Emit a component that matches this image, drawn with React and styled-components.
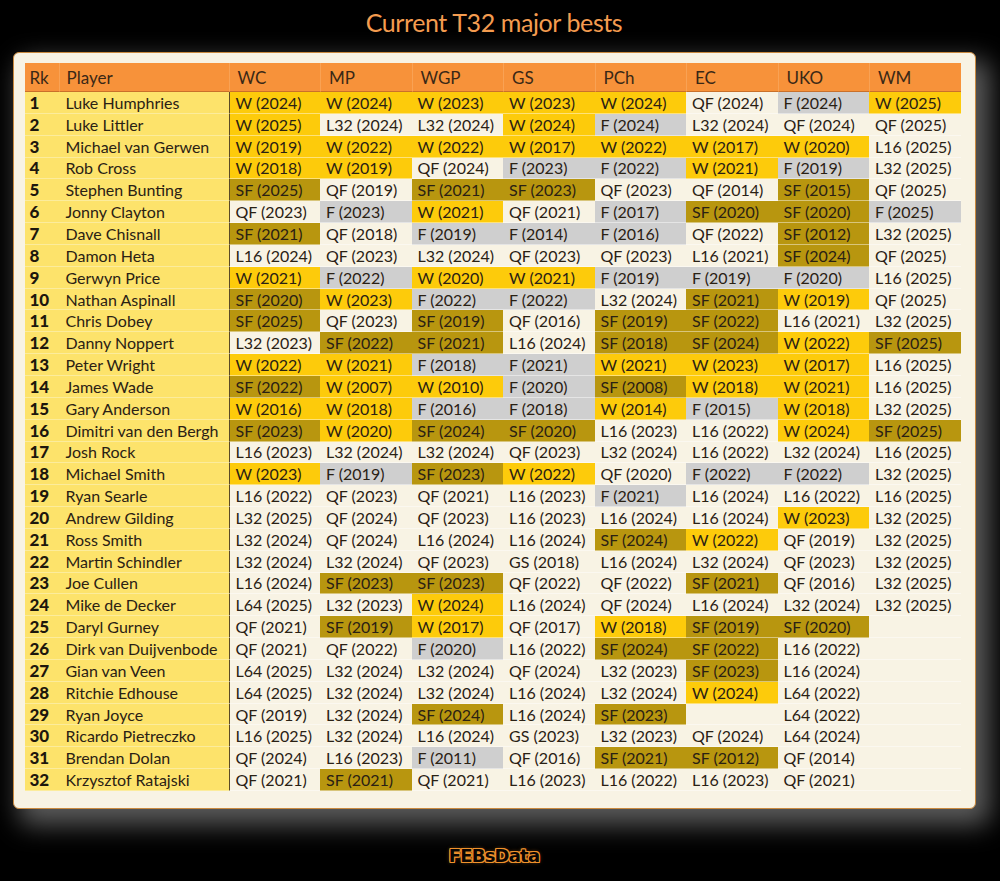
import React from 'react';
import styled, { createGlobalStyle } from 'styled-components';

const GlobalStyle = createGlobalStyle`
  html, body {
    margin: 0;
    padding: 0;
    background: #000;
  }
  body {
    font-family: Lato, "Open Sans", sans-serif;
  }
`;

const Page = styled.div`
  width: 988px;
  min-height: 881px;
  display: flex;
  flex-direction: column;
  align-items: center;
  background: #000;
`;

const Title = styled.h1`
  margin: 7px 0 15px;
  font-size: 25px;
  line-height: 30px;
  font-weight: 400;
  color: #f49c50;
  letter-spacing: -0.4px;
`;

const Card = styled.div`
  background: #f8f3e4;
  border: 1px solid #c9893e;
  border-radius: 6px;
  padding: 10px 14px 17px 11px;
  box-shadow: 10px 12px 26px 4px rgba(130, 130, 130, 0.7);
`;

const Grid = styled.div`
  display: grid;
  grid-template-columns: 34px 170px repeat(8, 91.5px);
  grid-template-rows: 29px;
  grid-auto-rows: 21.85px;
  font-size: 16px;
  color: #2a2114;
`;

const HeadCell = styled.div`
  display: flex;
  align-items: center;
  padding-left: ${p => (p.$pad ? p.$pad : 7)}px;
  background: #f7923a;
  border-left: ${p => (p.$edge ? 'none' : '1px solid #f9a254')};
  border-bottom: 1px solid #c9702a;
  color: #3a2816;
  font-size: 17px;
  white-space: nowrap;
`;

const RankCell = styled.div`
  display: flex;
  align-items: center;
  padding-left: 5px;
  background: #fde36b;
  border-bottom: 1px solid #fcec9c;
  font-weight: 900;
  font-size: 17px;
  color: #1d170d;
`;

const PlayerCell = styled.div`
  display: flex;
  align-items: center;
  padding-left: 7px;
  background: #fde36b;
  border-bottom: 1px solid #fcec9c;
  white-space: nowrap;
`;

const fills = {
  W: '#fdcb0b',
  F: '#cfcfcf',
  SF: '#b8960f',
};

const ResultCell = styled.div`
  display: flex;
  align-items: center;
  padding-left: 6px;
  background: ${p => fills[p.$kind] || 'transparent'};
  border-bottom: 1px solid rgba(255, 255, 255, 0.45);
  border-left: ${p => (p.$first ? '1px solid #5b4a26' : 'none')};
  white-space: nowrap;
`;

const Logo = styled.div`
  margin-top: 36px;
  font-family: "DejaVu Sans", Lato, sans-serif;
  font-weight: 700;
  font-size: 18px;
  letter-spacing: -0.8px;
  color: #0b0603;
  text-shadow:
    1px 0 0 #f0922c, -1px 0 0 #f0922c, 0 1px 0 #f0922c, 0 -1px 0 #f0922c,
    1px 1px 0 #f0922c, -1px -1px 0 #f0922c, 1px -1px 0 #f0922c, -1px 1px 0 #f0922c,
    0 0 4px rgba(240, 146, 44, 0.6);
`;

const events = ['WC', 'MP', 'WGP', 'GS', 'PCh', 'EC', 'UKO', 'WM'];

const players = [
  ['Luke Humphries', 'W (2024)', 'W (2024)', 'W (2023)', 'W (2023)', 'W (2024)', 'QF (2024)', 'F (2024)', 'W (2025)'],
  ['Luke Littler', 'W (2025)', 'L32 (2024)', 'L32 (2024)', 'W (2024)', 'F (2024)', 'L32 (2024)', 'QF (2024)', 'QF (2025)'],
  ['Michael van Gerwen', 'W (2019)', 'W (2022)', 'W (2022)', 'W (2017)', 'W (2022)', 'W (2017)', 'W (2020)', 'L16 (2025)'],
  ['Rob Cross', 'W (2018)', 'W (2019)', 'QF (2024)', 'F (2023)', 'F (2022)', 'W (2021)', 'F (2019)', 'L32 (2025)'],
  ['Stephen Bunting', 'SF (2025)', 'QF (2019)', 'SF (2021)', 'SF (2023)', 'QF (2023)', 'QF (2014)', 'SF (2015)', 'QF (2025)'],
  ['Jonny Clayton', 'QF (2023)', 'F (2023)', 'W (2021)', 'QF (2021)', 'F (2017)', 'SF (2020)', 'SF (2020)', 'F (2025)'],
  ['Dave Chisnall', 'SF (2021)', 'QF (2018)', 'F (2019)', 'F (2014)', 'F (2016)', 'QF (2022)', 'SF (2012)', 'L32 (2025)'],
  ['Damon Heta', 'L16 (2024)', 'QF (2023)', 'L32 (2024)', 'QF (2023)', 'QF (2023)', 'L16 (2021)', 'SF (2024)', 'QF (2025)'],
  ['Gerwyn Price', 'W (2021)', 'F (2022)', 'W (2020)', 'W (2021)', 'F (2019)', 'F (2019)', 'F (2020)', 'L16 (2025)'],
  ['Nathan Aspinall', 'SF (2020)', 'W (2023)', 'F (2022)', 'F (2022)', 'L32 (2024)', 'SF (2021)', 'W (2019)', 'QF (2025)'],
  ['Chris Dobey', 'SF (2025)', 'QF (2023)', 'SF (2019)', 'QF (2016)', 'SF (2019)', 'SF (2022)', 'L16 (2021)', 'L32 (2025)'],
  ['Danny Noppert', 'L32 (2023)', 'SF (2022)', 'SF (2021)', 'L16 (2024)', 'SF (2018)', 'SF (2024)', 'W (2022)', 'SF (2025)'],
  ['Peter Wright', 'W (2022)', 'W (2021)', 'F (2018)', 'F (2021)', 'W (2021)', 'W (2023)', 'W (2017)', 'L16 (2025)'],
  ['James Wade', 'SF (2022)', 'W (2007)', 'W (2010)', 'F (2020)', 'SF (2008)', 'W (2018)', 'W (2021)', 'L16 (2025)'],
  ['Gary Anderson', 'W (2016)', 'W (2018)', 'F (2016)', 'F (2018)', 'W (2014)', 'F (2015)', 'W (2018)', 'L32 (2025)'],
  ['Dimitri van den Bergh', 'SF (2023)', 'W (2020)', 'SF (2024)', 'SF (2020)', 'L16 (2023)', 'L16 (2022)', 'W (2024)', 'SF (2025)'],
  ['Josh Rock', 'L16 (2023)', 'L32 (2024)', 'L32 (2024)', 'QF (2023)', 'L32 (2024)', 'L16 (2022)', 'L32 (2024)', 'L16 (2025)'],
  ['Michael Smith', 'W (2023)', 'F (2019)', 'SF (2023)', 'W (2022)', 'QF (2020)', 'F (2022)', 'F (2022)', 'L32 (2025)'],
  ['Ryan Searle', 'L16 (2022)', 'QF (2023)', 'QF (2021)', 'L16 (2023)', 'F (2021)', 'L16 (2024)', 'L16 (2022)', 'L16 (2025)'],
  ['Andrew Gilding', 'L32 (2025)', 'QF (2024)', 'QF (2023)', 'L16 (2023)', 'L16 (2024)', 'L16 (2024)', 'W (2023)', 'L32 (2025)'],
  ['Ross Smith', 'L32 (2024)', 'QF (2024)', 'L16 (2024)', 'L16 (2024)', 'SF (2024)', 'W (2022)', 'QF (2019)', 'L32 (2025)'],
  ['Martin Schindler', 'L32 (2024)', 'L32 (2024)', 'QF (2023)', 'GS (2018)', 'L16 (2024)', 'L32 (2024)', 'QF (2023)', 'L32 (2025)'],
  ['Joe Cullen', 'L16 (2024)', 'SF (2023)', 'SF (2023)', 'QF (2022)', 'QF (2022)', 'SF (2021)', 'QF (2016)', 'L32 (2025)'],
  ['Mike de Decker', 'L64 (2025)', 'L32 (2023)', 'W (2024)', 'L16 (2024)', 'QF (2024)', 'L16 (2024)', 'L32 (2024)', 'L32 (2025)'],
  ['Daryl Gurney', 'QF (2021)', 'SF (2019)', 'W (2017)', 'QF (2017)', 'W (2018)', 'SF (2019)', 'SF (2020)', ''],
  ['Dirk van Duijvenbode', 'QF (2021)', 'QF (2022)', 'F (2020)', 'L16 (2022)', 'SF (2024)', 'SF (2022)', 'L16 (2022)', ''],
  ['Gian van Veen', 'L64 (2025)', 'L32 (2024)', 'L32 (2024)', 'QF (2024)', 'L32 (2023)', 'SF (2023)', 'L16 (2024)', ''],
  ['Ritchie Edhouse', 'L64 (2025)', 'L32 (2024)', 'L32 (2024)', 'L16 (2024)', 'L32 (2024)', 'W (2024)', 'L64 (2022)', ''],
  ['Ryan Joyce', 'QF (2019)', 'L32 (2024)', 'SF (2024)', 'L16 (2024)', 'SF (2023)', '', 'L64 (2022)', ''],
  ['Ricardo Pietreczko', 'L16 (2025)', 'L32 (2024)', 'L16 (2024)', 'GS (2023)', 'L32 (2023)', 'QF (2024)', 'L64 (2024)', ''],
  ['Brendan Dolan', 'QF (2024)', 'L16 (2023)', 'F (2011)', 'QF (2016)', 'SF (2021)', 'SF (2012)', 'QF (2014)', ''],
  ['Krzysztof Ratajski', 'QF (2021)', 'SF (2021)', 'QF (2021)', 'L16 (2023)', 'L16 (2022)', 'L16 (2023)', 'QF (2021)', ''],
];

const kindOf = result => result.split(' ')[0];

const App = () => {
  return (
    <>
      <GlobalStyle />
      <Page>
        <Title>Current T32 major bests</Title>
        <Card>
          <Grid>
            <HeadCell $edge $pad={5}>Rk</HeadCell>
            <HeadCell>Player</HeadCell>
            {events.map(ev => (
              <HeadCell key={ev} $pad={8}>{ev}</HeadCell>
            ))}
            {players.map(([name, ...results], i) => (
              <React.Fragment key={name}>
                <RankCell>{i + 1}</RankCell>
                <PlayerCell>{name}</PlayerCell>
                {results.map((r, j) => (
                  <ResultCell key={events[j]} $kind={kindOf(r)} $first={j === 0}>
                    {r}
                  </ResultCell>
                ))}
              </React.Fragment>
            ))}
          </Grid>
        </Card>
        <Logo>FEBsData</Logo>
      </Page>
    </>
  );
};

export default App;
